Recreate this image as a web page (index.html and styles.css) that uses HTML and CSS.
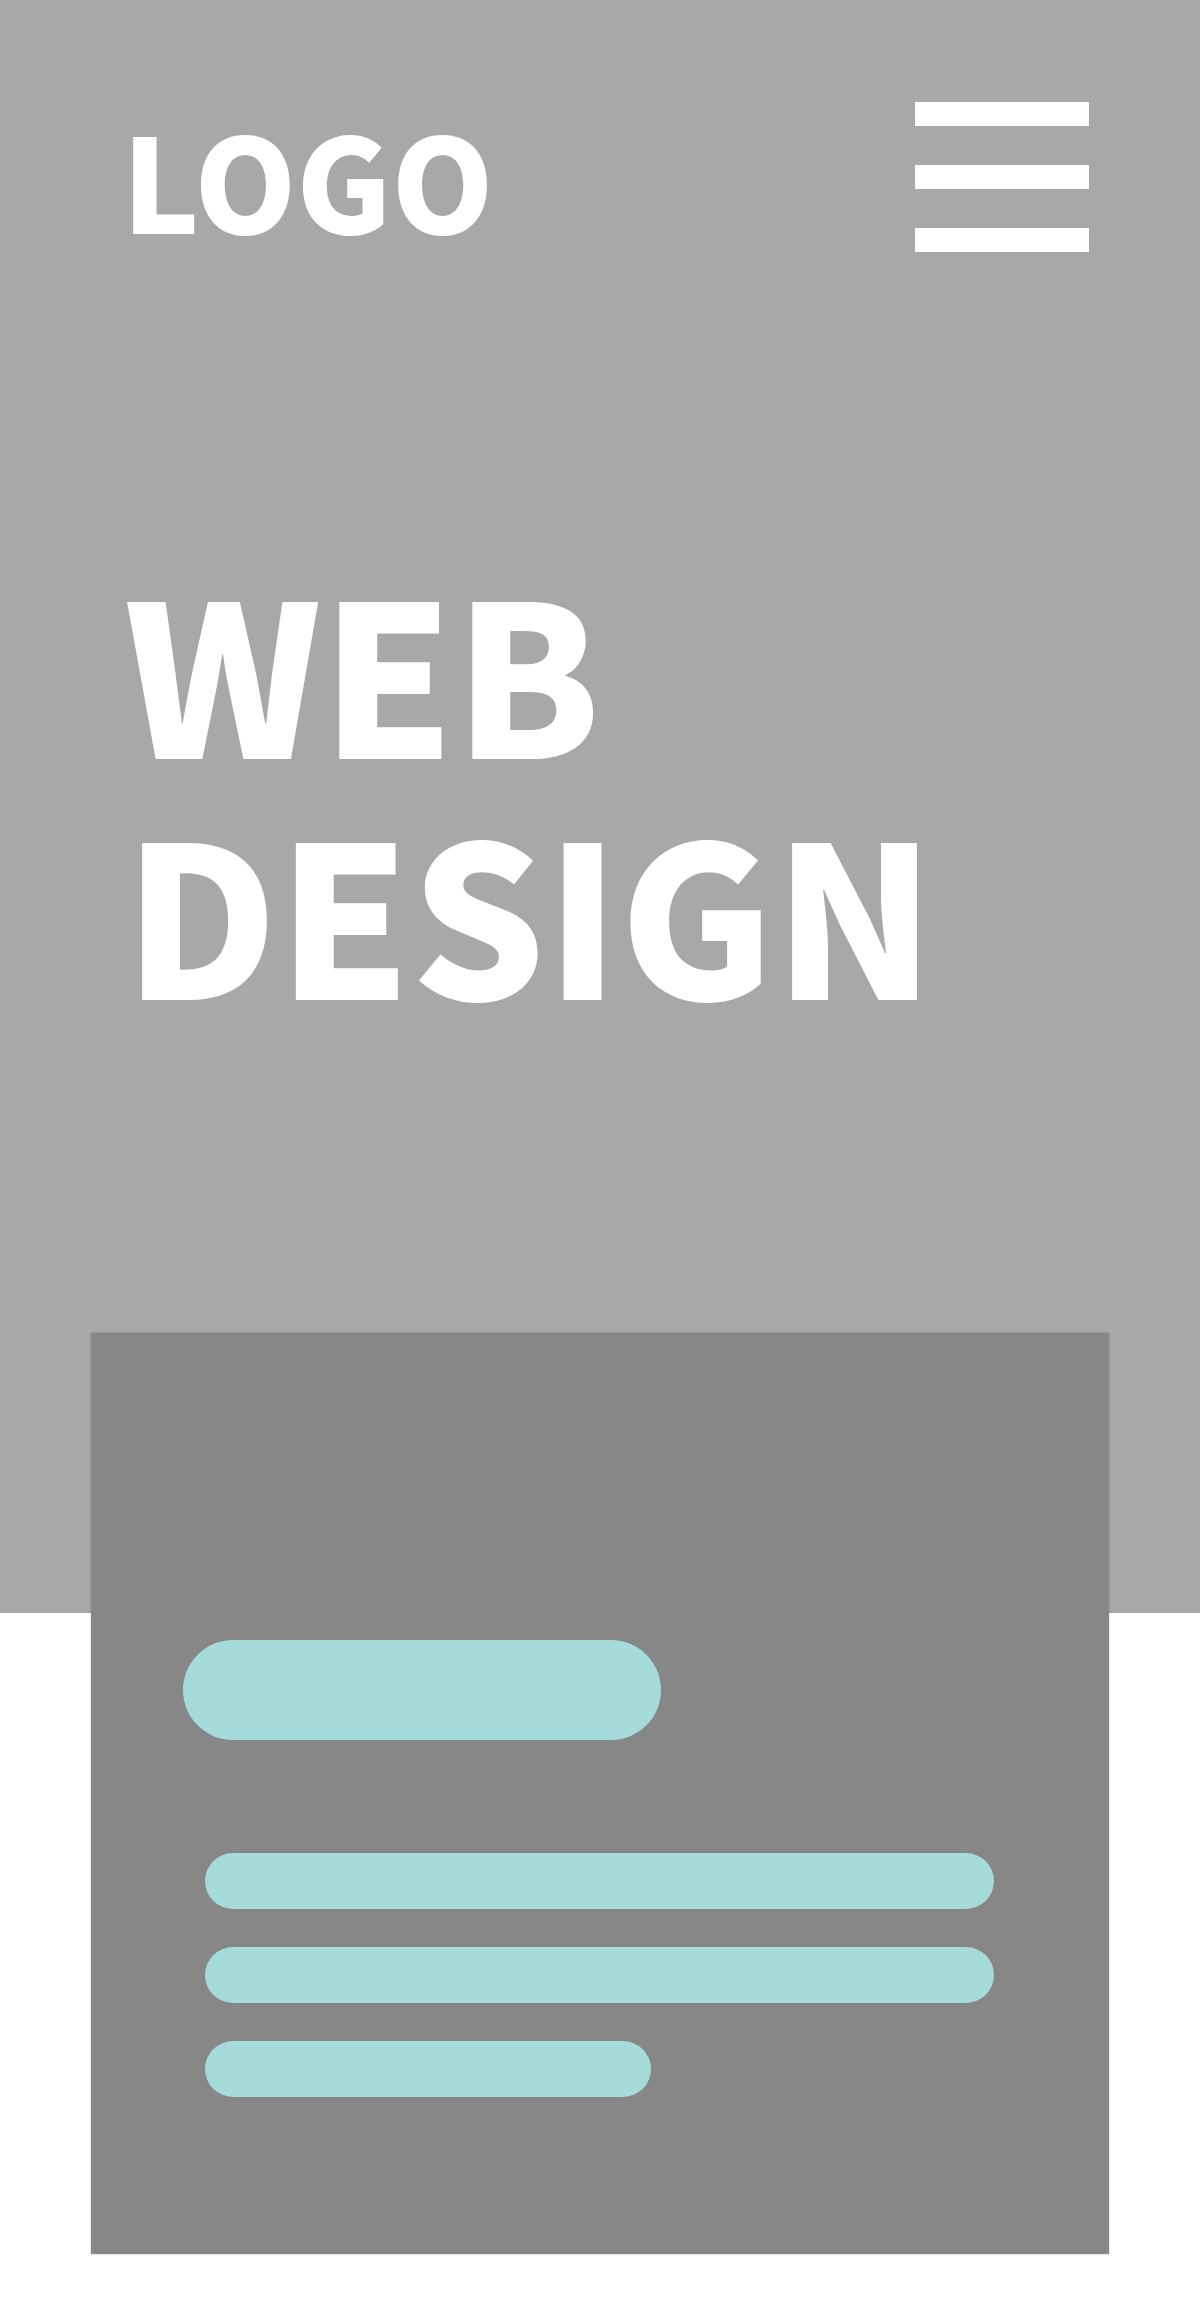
FILE: index.html
```html
<html>

<head>
    <meta charset="utf-8">
    <link rel="stylesheet" href="styles.css">
</head>

<body>

    <div class="hero">
        <div class="top-bar">
            <div class="logo">LOGO</div>
            <div class="menu-btn">
                <span></span>
                <span></span>
                <span></span>
            </div>
        </div>

        <h1 class="title">WEB<br>DESIGN</h1>
    </div>

    <div class="card">
        <div class="card-head"></div>
        <div class="card-lines">
            <div class="line"></div>
            <div class="line"></div>
            <div class="line short"></div>
        </div>
    </div>

</body>

</html>
```

FILE: styles.css
```css
body {
    margin: 0;
    background: #fff;
    font-family: "Noto Sans CJK JP", "Noto Sans", sans-serif;
}

.hero {
    background: #a8a8a8;
    padding: 102px 111px 584px 124px;
}

.top-bar {
    display: flex;
    justify-content: space-between;
    align-items: center;
}

.logo {
    color: #fff;
    font-weight: 900;
    font-size: 130px;
    line-height: 1;
    margin-left: -2px;
}

.menu-btn {
    display: flex;
    flex-direction: column;
    gap: 39px;
}

.menu-btn span {
    display: block;
    width: 174px;
    height: 24px;
    background: #fff;
}

.title {
    margin: 295px 0 0;
    color: #fff;
    font-weight: 900;
    font-size: 211px;
    line-height: 241px;
    letter-spacing: 0;
}

.card {
    width: 1018px;
    margin: -280px auto 0;
    background: #878787;
    box-shadow: 0 0 2px rgba(0, 0, 0, 0.25);
    padding: 307px 92px 157px;
    box-sizing: border-box;
}

.card-head {
    width: 478px;
    height: 100px;
    border-radius: 50px;
    background: #a5dcda;
}

.card-lines {
    margin: 113px 0 0 22px;
    display: flex;
    flex-direction: column;
    gap: 38px;
}

.line {
    width: 789px;
    height: 56px;
    border-radius: 28px;
    background: #a5dcda;
}

.line.short {
    width: 446px;
}
```
